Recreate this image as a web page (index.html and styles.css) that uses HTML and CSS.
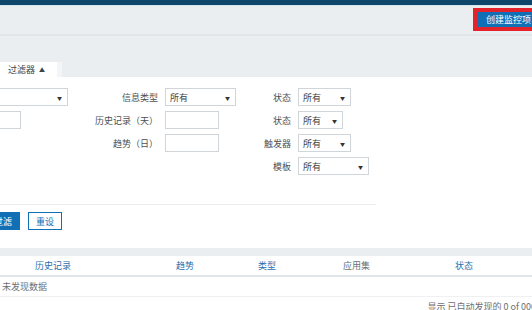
FILE: index.html
```html
<!DOCTYPE html>
<html>
<head>
    <title>监控项</title>
    <link rel="stylesheet" href="styles.css">
</head>
<body>
    <div class="topbar"></div>
    <div class="header">
        <span class="mark"><button class="btn-create">创建监控项</button></span>
    </div>
    <div class="gap"></div>

    <div class="tabs">
        <div class="tab">过滤器 <span class="caret">▲</span></div>
        <div class="tab-edge"></div>
    </div>

    <div class="filter">
        <div class="form">
            <div class="col col1">
                <div class="row"><span class="select w148"><span>&nbsp;</span><i>▼</i></span></div>
                <div class="row"><span class="input w101"></span></div>
            </div>
            <div class="col col2">
                <div class="row"><label>信息类型</label><span class="select w70"><span>所有</span><i>▼</i></span></div>
                <div class="row"><label>历史记录（天）</label><span class="input w54"></span></div>
                <div class="row"><label>趋势（日）</label><span class="input w54"></span></div>
            </div>
            <div class="col col3">
                <div class="row"><label>状态</label><span class="select w53"><span>所有</span><i>▼</i></span></div>
                <div class="row"><label>状态</label><span class="select w45"><span>所有</span><i>▼</i></span></div>
                <div class="row"><label>触发器</label><span class="select w53"><span>所有</span><i>▼</i></span></div>
                <div class="row"><label>模板</label><span class="select w70"><span>所有</span><i>▼</i></span></div>
            </div>
        </div>
        <div class="sep"></div>
        <div class="actions">
            <button class="btn-apply">过滤</button>
            <button class="btn-reset">重设</button>
        </div>
    </div>

    <div class="band"></div>

    <div class="list">
        <div class="thead">
            <span></span>
            <a>历史记录</a>
            <a>趋势</a>
            <a>类型</a>
            <span>应用集</span>
            <a>状态</a>
        </div>
        <div class="empty">未发现数据</div>
        <div class="foot">显示 已自动发现的 0 of 000</div>
    </div>
</body>
</html>
```

FILE: styles.css
```css
body { margin: 0; font-family: "Noto Sans CJK SC", "Liberation Sans", sans-serif; font-size: 9px; color: #4c4f52; background: #fff; overflow: hidden; }
.topbar { height: 5px; background: #0d456b; border-bottom: 1px solid #d3e4ee; }
.header { height: 28px; background: #ebeef0; border-bottom: 2px solid #e1e5e8; display: flex; justify-content: flex-end; align-items: flex-start; }
.mark { margin-top: 2px; padding: 4px 0 4px 4px; background: #e3222c; display: flex; }
.btn-create { border: 0; background: #1170b5; color: #fff; font: inherit; font-size: 9px; height: 15px; width: 55px; padding: 0 0 0 9px; text-align: left; line-height: 15px; white-space: nowrap; }
.gap { height: 26px; background: #ebeef0; }
.tabs { display: flex; background: #ebeef0; height: 15px; }
.tab { width: 49px; padding-left: 8px; background: #fff; line-height: 15px; color: #3d4245; }
.caret { font-size: 6px; margin-left: 2px; vertical-align: 1px; }
.tab-edge { width: 5px; background: #f4f5f6; }
.filter { background: #fff; padding-top: 11px; }
.form { display: flex; }
.col { display: flex; flex-direction: column; gap: 5px; }
.row { display: flex; align-items: center; height: 18px; gap: 7px; }
.col1 { margin-left: -80px; width: 170px; }
.col2 { width: 171px; }
.col2 label { width: 68px; }
.col3 label { width: 30px; }
label { text-align: right; white-space: nowrap; color: #4c4f52; }
.select, .input { box-sizing: border-box; height: 18px; border: 1px solid #cfd5d9; background: #fff; display: flex; align-items: center; justify-content: space-between; padding: 0 5px 0 4px; color: #3d4245; }
.select i { font-style: normal; font-size: 5px; color: #333; }
.w148 { width: 148px; }
.w101 { width: 101px; }
.w70 { width: 71px; }
.w54 { width: 54px; }
.w53 { width: 53px; }
.w45 { width: 45px; }
.sep { width: 376px; height: 1px; background: #ebeef0; margin-top: 29px; }
.actions { display: flex; gap: 8px; padding: 7px 0 18px; margin-left: -14px; }
.actions button { box-sizing: border-box; height: 18px; font: inherit; font-size: 9px; padding: 0; }
.btn-apply { width: 34px; border: 1px solid #1170b5; background: #1170b5; color: #fff; }
.btn-reset { width: 34px; border: 1px solid #1170b5; background: #fff; color: #1170b5; }
.band { height: 8px; background: #ebeef0; }
.thead { display: grid; grid-template-columns: 35px 141px 82px 85px 112px 1fr; height: 19px; line-height: 19px; border-bottom: 2px solid #e1e5e8; }
.thead a { color: #1f6fb0; }
.thead span { color: #6b7074; }
.empty { height: 19px; line-height: 19px; padding-left: 2px; border-bottom: 1px solid #eef0f2; color: #6b7074; }
.foot { text-align: right; padding-top: 3px; margin-right: -4px; white-space: nowrap; color: #6b7074; }
```
